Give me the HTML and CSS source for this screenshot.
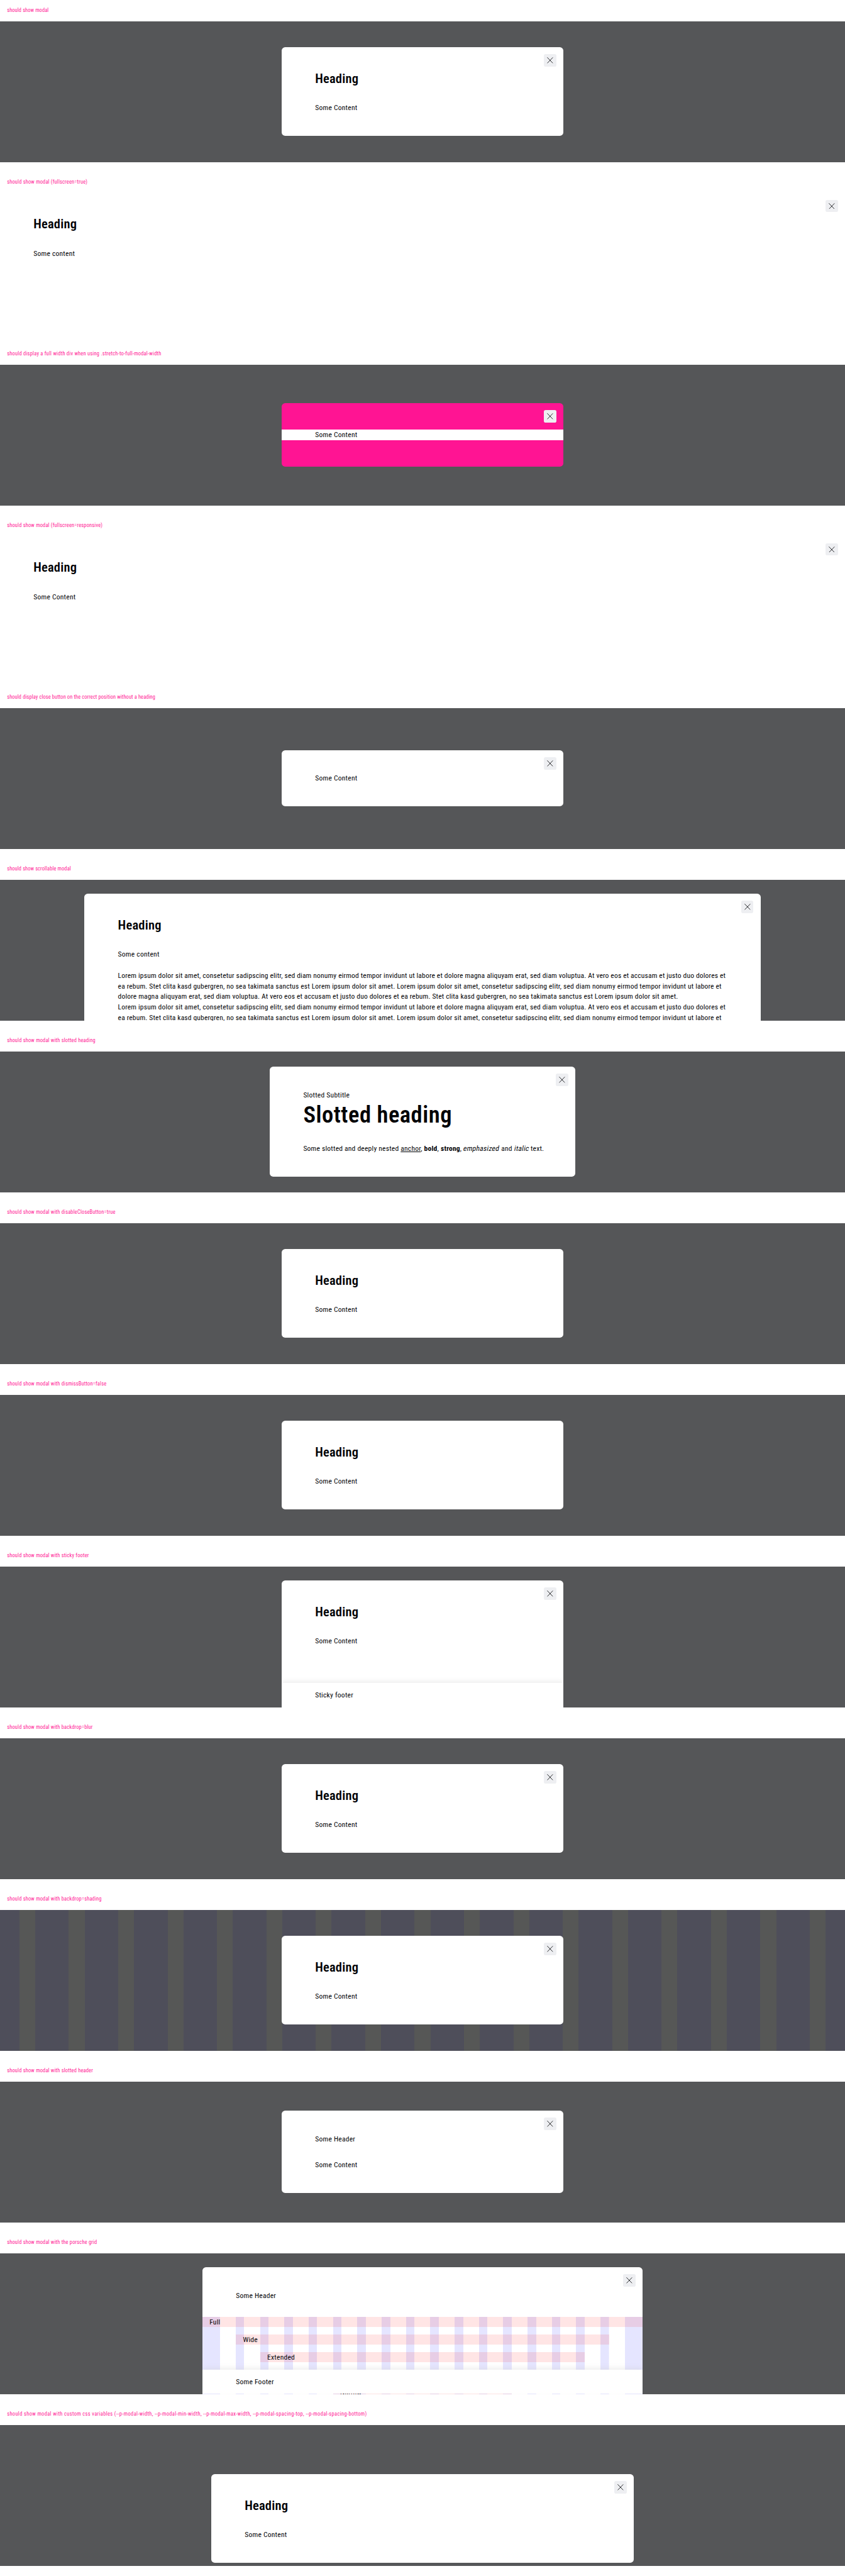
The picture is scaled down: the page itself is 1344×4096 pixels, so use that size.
FILE: index.html
```html
<!DOCTYPE html>
<html lang="en">
<head>
<meta charset="utf-8">
<title>Modal overview</title>
<link rel="stylesheet" href="styles.css">
</head>
<body>
<svg class="sprite" aria-hidden="true"><symbol id="close" viewBox="0 0 14 14"><path d="M0.5 0.3 L13.5 13.7 M13.5 0.3 L0.5 13.7" fill="none" stroke="#010205" stroke-width="1.15"/></symbol></svg>

<section class="case">
  <h2 class="label label-tight">should show modal</h2>
  <div class="stage">
    <div class="modal">
      <button class="close"><svg><use href="#close"/></svg></button>
      <h3 class="heading">Heading</h3>
      <p>Some Content</p>
    </div>
  </div>
</section>

<section class="case">
  <h2 class="label">should show modal (fullscreen=true)</h2>
  <div class="stage">
    <div class="modal fullscreen">
      <button class="close"><svg><use href="#close"/></svg></button>
      <h3 class="heading">Heading</h3>
      <p>Some content</p>
    </div>
  </div>
</section>

<section class="case">
  <h2 class="label label-loose">should display a full width div when using .stretch-to-full-modal-width</h2>
  <div class="stage">
    <div class="modal pink">
      <button class="close"><svg><use href="#close"/></svg></button>
      <p class="stretch">Some Content</p>
    </div>
  </div>
</section>

<section class="case">
  <h2 class="label">should show modal (fullscreen=responsive)</h2>
  <div class="stage">
    <div class="modal fullscreen">
      <button class="close"><svg><use href="#close"/></svg></button>
      <h3 class="heading">Heading</h3>
      <p>Some Content</p>
    </div>
  </div>
</section>

<section class="case">
  <h2 class="label label-tight">should display close button on the correct position without a heading</h2>
  <div class="stage">
    <div class="modal">
      <button class="close"><svg><use href="#close"/></svg></button>
      <p>Some Content</p>
    </div>
  </div>
</section>

<section class="case">
  <h2 class="label label-tight">should show scrollable modal</h2>
  <div class="stage top">
    <div class="modal scrollable">
      <button class="close"><svg><use href="#close"/></svg></button>
      <h3 class="heading">Heading</h3>
      <p>Some content</p>
      <p class="lorem">Lorem ipsum dolor sit amet, consetetur sadipscing elitr, sed diam nonumy eirmod tempor invidunt ut labore et dolore magna aliquyam erat, sed diam voluptua. At vero eos et accusam et justo duo dolores et<br>ea rebum. Stet clita kasd gubergren, no sea takimata sanctus est Lorem ipsum dolor sit amet. Lorem ipsum dolor sit amet, consetetur sadipscing elitr, sed diam nonumy eirmod tempor invidunt ut labore et<br>dolore magna aliquyam erat, sed diam voluptua. At vero eos et accusam et justo duo dolores et ea rebum. Stet clita kasd gubergren, no sea takimata sanctus est Lorem ipsum dolor sit amet.<br>Lorem ipsum dolor sit amet, consetetur sadipscing elitr, sed diam nonumy eirmod tempor invidunt ut labore et dolore magna aliquyam erat, sed diam voluptua. At vero eos et accusam et justo duo dolores et<br>ea rebum. Stet clita kasd gubergren, no sea takimata sanctus est Lorem ipsum dolor sit amet. Lorem ipsum dolor sit amet, consetetur sadipscing elitr, sed diam nonumy eirmod tempor invidunt ut labore et</p>
    </div>
  </div>
</section>

<section class="case">
  <h2 class="label">should show modal with slotted heading</h2>
  <div class="stage">
    <div class="modal slotted">
      <button class="close"><svg><use href="#close"/></svg></button>
      <p class="subtitle">Slotted Subtitle</p>
      <h3 class="display">Slotted heading</h3>
      <p class="rich">Some slotted and deeply nested <a>anchor</a>, <b>bold</b>, <strong>strong</strong>, <em>emphasized</em> and <i>italic</i> text.</p>
    </div>
  </div>
</section>

<section class="case">
  <h2 class="label">should show modal with disableCloseButton=true</h2>
  <div class="stage">
    <div class="modal">
      <h3 class="heading">Heading</h3>
      <p>Some Content</p>
    </div>
  </div>
</section>

<section class="case">
  <h2 class="label">should show modal with dismissButton=false</h2>
  <div class="stage">
    <div class="modal">
      <h3 class="heading">Heading</h3>
      <p>Some Content</p>
    </div>
  </div>
</section>

<section class="case">
  <h2 class="label">should show modal with sticky footer</h2>
  <div class="stage top">
    <div class="modal sticky">
      <button class="close"><svg><use href="#close"/></svg></button>
      <h3 class="heading">Heading</h3>
      <p>Some Content</p>
      <footer class="footer">Sticky footer</footer>
    </div>
  </div>
</section>

<section class="case">
  <h2 class="label">should show modal with backdrop=blur</h2>
  <div class="stage">
    <div class="modal">
      <button class="close"><svg><use href="#close"/></svg></button>
      <h3 class="heading">Heading</h3>
      <p>Some Content</p>
    </div>
  </div>
</section>

<section class="case">
  <h2 class="label">should show modal with backdrop=shading</h2>
  <div class="stage striped">
    <div class="modal">
      <button class="close"><svg><use href="#close"/></svg></button>
      <h3 class="heading">Heading</h3>
      <p>Some Content</p>
    </div>
  </div>
</section>

<section class="case">
  <h2 class="label">should show modal with slotted header</h2>
  <div class="stage">
    <div class="modal">
      <button class="close"><svg><use href="#close"/></svg></button>
      <p class="header">Some Header</p>
      <p>Some Content</p>
    </div>
  </div>
</section>

<section class="case">
  <h2 class="label">should show modal with the porsche grid</h2>
  <div class="stage top">
    <div class="modal gridded">
      <button class="close"><svg><use href="#close"/></svg></button>
      <p class="header">Some Header</p>
      <div class="grid">
        <div class="row full">Full</div>
        <div class="row wide">Wide</div>
        <div class="row extended">Extended</div>
        <div class="row basic"></div>
        <div class="row narrow">Narrow</div>
      </div>
      <footer class="footer over">Some Footer</footer>
    </div>
  </div>
</section>

<section class="case">
  <h2 class="label label-wide">should show modal with custom css variables (--p-modal-width, --p-modal-min-width, --p-modal-max-width, --p-modal-spacing-top, --p-modal-spacing-bottom)</h2>
  <div class="stage top">
    <div class="modal custom">
      <button class="close"><svg><use href="#close"/></svg></button>
      <h3 class="heading">Heading</h3>
      <p>Some Content</p>
    </div>
  </div>
</section>
</body>
</html>
```
FILE: styles.css
```css
* { box-sizing: border-box; }

body {
  margin: 0;
  background: #fff;
  color: #010205;
  font: 400 11.55px/16.8px "Roboto Condensed", Roboto, sans-serif;
  letter-spacing: 0.24px;
}

h2, h3, p { margin: 0; font-weight: 400; white-space: nowrap; }

.sprite { display: none; }

.case { height: 273px; overflow: hidden; }

.label {
  height: 33.6px;
  padding-left: 11.2px;
  color: #ff1493;
  font-size: 8.4px;
  line-height: 33.6px;
  letter-spacing: 0.2px;
}
.label-tight { letter-spacing: 0.12px; }
.label-loose { letter-spacing: 0.245px; }
.label-wide { letter-spacing: 0.388px; }

.stage {
  display: flex;
  align-items: center;
  justify-content: center;
  height: 224px;
  overflow: hidden;
  background: #555658;
}
.stage.top { align-items: flex-start; padding-top: 22.4px; }

/* 16 columns with 25.2px gutters and 30.8px outer margins */
.striped {
  background: repeating-linear-gradient(90deg, #4e4e5a 0 53.375px, #565756 53.375px 78.575px) -22.575px 0 / 1400px 100%;
}

.modal {
  position: relative;
  flex: none;
  width: 448px;
  padding: 36.7px 53.2px 36.1px;
  border-radius: 5.6px;
  background: #fff;
}

.close {
  position: absolute;
  top: 11.2px;
  right: 11.2px;
  display: grid;
  place-items: center;
  width: 19.6px;
  height: 19.6px;
  padding: 0;
  border: 0;
  border-radius: 2.8px;
  background: #eeeff2;
}
.close svg { width: 9.8px; height: 9.8px; }

.heading {
  margin-bottom: 25.2px;
  font-size: 20.5px;
  font-weight: 600;
  line-height: 26.3px;
  letter-spacing: 0.2px;
}

.fullscreen { align-self: stretch; width: 100%; border-radius: 0; }

.pink { padding: 42px 0; background: #ff1493; }
.stretch { padding-left: 53.2px; background: #fff; }

.scrollable { width: 1075.2px; border-radius: 5.6px 5.6px 0 0; }
.lorem { margin-top: 16.8px; letter-spacing: 0.166px; }

.slotted { width: 485.6px; }
.display {
  margin-bottom: 23.5px;
  font-size: 36.6px;
  font-weight: 600;
  line-height: 45.1px;
  letter-spacing: 0.5px;
}
.rich { letter-spacing: 0.215px; }
.rich a { text-decoration: underline; text-underline-offset: 1.4px; }
.rich em, .rich i { display: inline-block; font-style: normal; transform: skewX(-11deg); }

.header { margin-bottom: 25.2px; }

.footer {
  height: 39.2px;
  margin: 58.1px -53.2px 0;
  padding: 11.2px 53.2px;
  background: #fff;
  box-shadow: 0 -3.5px 7px rgba(204, 204, 204, 0.35);
}
.sticky, .gridded { overflow: hidden; padding-bottom: 0; border-radius: 5.6px 5.6px 0 0; }

.gridded { width: 700px; height: 201.6px; }
.grid {
  display: grid;
  grid-template-columns: 28px repeat(16, 13.475px) 28px;
  grid-auto-rows: 16.8px;
  gap: 11.2px 25.2px;
  height: 128.8px;
  margin: 0 -53.2px;
  background:
    linear-gradient(#e5e5ff, #e5e5ff) 0 0 / 28px 100% no-repeat,
    linear-gradient(#e5e5ff, #e5e5ff) 100% 0 / 28px 100% no-repeat,
    repeating-linear-gradient(90deg, #e5e5ff 0 13.475px, transparent 13.475px 38.675px) 53.2px 0 / 593.6px 100% no-repeat;
}
.row { padding-left: 11.2px; background: rgba(255, 0, 0, 0.1); }
.full { grid-column: 1 / -1; }
.wide { grid-column: 2 / -2; }
.extended { grid-column: 3 / -3; }
.basic { grid-column: 5 / -5; }
.narrow { grid-column: 6 / -6; }
.over { position: relative; height: 38.8px; margin-top: -44.8px; }

.custom { width: 672px; margin-top: 56px; }
```
